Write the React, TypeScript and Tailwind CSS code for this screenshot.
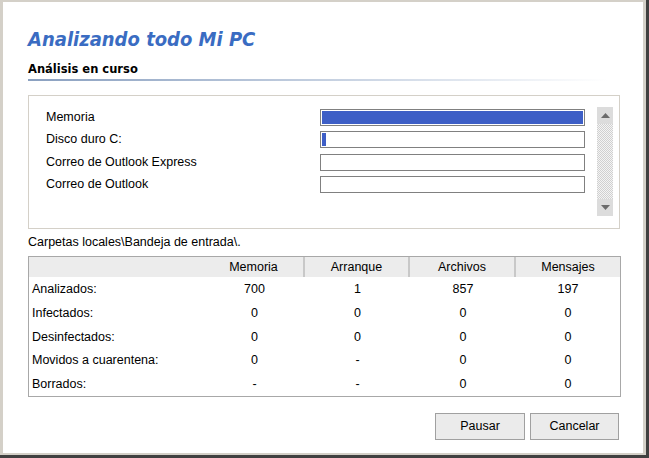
const font = { fontFamily: '"DejaVu Sans", Verdana, sans-serif' };
const titleFont = {
  fontFamily: '"DejaVu Sans Condensed", "DejaVu Sans", Verdana, sans-serif',
  fontStretch: "condensed",
};

const items = [
  { label: "Memoria", pct: 100 },
  { label: "Disco duro C:", pct: 1.5 },
  { label: "Correo de Outlook Express", pct: 0 },
  { label: "Correo de Outlook", pct: 0 },
];

const cols = ["Memoria", "Arranque", "Archivos", "Mensajes"];

const rows: [string, string[]][] = [
  ["Analizados:", ["700", "1", "857", "197"]],
  ["Infectados:", ["0", "0", "0", "0"]],
  ["Desinfectados:", ["0", "0", "0", "0"]],
  ["Movidos a cuarentena:", ["0", "-", "0", "0"]],
  ["Borrados:", ["-", "-", "0", "0"]],
];

const colWidths = ["w-[101px]", "w-[105px]", "w-[106px]", "flex-1"];

function Arrow({ down }: { down?: boolean }) {
  return (
    <div className="flex h-[17px] w-[16px] items-center justify-center bg-[#dcdcdc]">
      <svg width="9" height="5" viewBox="0 0 9 5">
        <polygon
          points={down ? "0,0 9,0 4.5,5" : "0,5 9,5 4.5,0"}
          fill="#6b6b6b"
        />
      </svg>
    </div>
  );
}

export default function App() {
  return (
    <div
      className="h-[458px] w-[649px] border-b-[3px] border-r-[3px] border-[#404040] bg-white text-[12px] text-black"
      style={{ fontFamily: '"Liberation Sans", Arial, sans-serif' }}
    >
      <div className="flex h-full flex-col border-b-2 border-l-[3px] border-r-[3px] border-t-2 border-[#d4d0c8] pl-[25px] pr-[23px]">
        <h1
          className="mt-[25px] text-[20px] font-bold italic leading-[24px] text-[#3a6cc2]"
          style={titleFont}
        >
          Analizando todo Mi PC
        </h1>
        <div className="mt-[10px] text-[11.5px] font-bold leading-[16px]" style={font}>
          Análisis en curso
        </div>
        <div className="mt-[2px] h-[2px] w-[580px] bg-gradient-to-r from-[#8aa0c0] to-white" />

        <div className="mt-[14px] flex h-[134px] border border-[#d4d0c8] pl-[17px] pr-[6px] pt-[13px]">
          <div className="flex flex-1 flex-col gap-[5.3px]">
            {items.map((it) => (
              <div key={it.label} className="flex h-[17px] items-center">
                <span className="w-[274px] leading-[17px]" style={{ fontSize: "12.5px" }}>
                  {it.label}
                </span>
                <div className="h-[17px] w-[265px] border border-[#808080] bg-white p-px">
                  <div
                    className="h-full bg-[#3d5ec6]"
                    style={{ width: `${it.pct}%`, minWidth: it.pct > 0 ? 3 : 0 }}
                  />
                </div>
              </div>
            ))}
          </div>
          <div className="-mt-[2px] mb-[12px] flex w-[16px] flex-col">
            <Arrow />
            <div className="flex-1 bg-[repeating-conic-gradient(#d0d0d0_0_25%,#f4f4f4_0_50%)] bg-[length:2px_2px]" />
            <Arrow down />
          </div>
        </div>

        <div className="mt-[5px] leading-[16px]" style={{ fontSize: "12.5px" }}>
          Carpetas locales\Bandeja de entrada\.
        </div>

        <div className="mt-[6px] w-[593px] border border-[#a8a8a8]" style={{ fontSize: "12.5px" }}>
          <div className="flex h-[20px] items-center bg-[#ececec] leading-[20px]">
            <div className="w-[175px] border-r-2 border-[#c8c8c8]" />
            {cols.map((c, i) => (
              <div
                key={c}
                className={`${colWidths[i]} text-center ${i < 3 ? "border-r-2 border-[#c8c8c8]" : ""}`}
              >
                {c}
              </div>
            ))}
          </div>
          <div className="flex flex-col pt-[1px]">
            {rows.map(([name, vals]) => (
              <div key={name} className="flex h-[23.6px] items-center">
                <div className="w-[175px] pl-[3px]">{name}</div>
                {vals.map((v, i) => (
                  <div key={i} className={`${colWidths[i]} text-center`}>
                    {v}
                  </div>
                ))}
              </div>
            ))}
          </div>
        </div>

        <div className="mt-[16px] flex justify-end gap-[5px] pr-[1px]" style={{ fontSize: "12.5px" }}>
          <button className="h-[27px] w-[90px] border border-[#a0a0a0] bg-[#ebebeb]">
            Pausar
          </button>
          <button className="h-[27px] w-[89px] border border-[#a0a0a0] bg-[#ebebeb]">
            Cancelar
          </button>
        </div>
      </div>
    </div>
  );
}
